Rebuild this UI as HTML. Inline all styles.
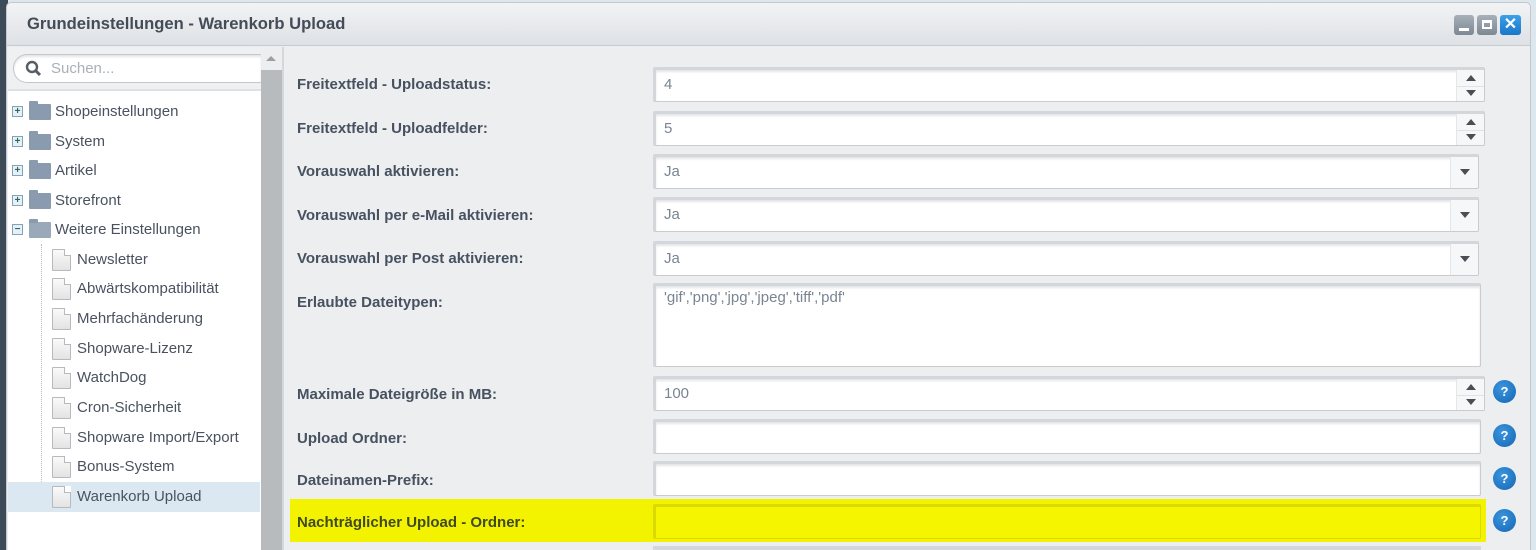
<!DOCTYPE html>
<html><head><meta charset="utf-8"><style>
*{margin:0;padding:0;box-sizing:border-box}
html,body{width:1536px;height:550px;overflow:hidden}
body{background:#dde7ee;font-family:"Liberation Sans",sans-serif;position:relative}
.abs{position:absolute}
.lbl{position:absolute;left:297px;font-size:15px;font-weight:bold;color:#475160}
.inp{position:absolute;left:653px;width:828px;height:35px;background:#fff;border:1px solid #c8ccd1;box-shadow:inset 0 2px 2px #e2e5e8;border-top:3px solid #d3d6da;border-left:3px solid #d3d6da;border-radius:2px;font-size:15px;color:#7a8592;padding:6px 0 0 8px;overflow:hidden}
.spin{position:absolute;right:0;top:0;width:28px;height:100%;background:#f6f7f8;border-left:1px solid #e4e6e8}
.spin:before{content:"";position:absolute;left:9px;top:5px;border:5px solid transparent;border-bottom:6px solid #4b4f55;border-top:0}
.spin:after{content:"";position:absolute;left:9px;bottom:5px;border:5px solid transparent;border-top:6px solid #4b4f55;border-bottom:0}
.spin i{position:absolute;left:0;right:0;top:50%;border-top:1px solid #e0e2e5}
.trig{position:absolute;right:0;top:0;width:28px;height:100%;background:#f6f7f8;border-left:1px solid #e4e6e8}
.trig:after{content:"";position:absolute;left:9px;top:12px;border:5px solid transparent;border-top:6px solid #4b4f55;border-bottom:0}
.help{position:absolute;left:1493px;width:23px;height:23px;border-radius:50%;background:radial-gradient(circle at 40% 35%,#3b95dd,#1566b3);color:#fff;font-size:13px;font-weight:bold;text-align:center;line-height:23px}
.tr{position:absolute;left:0;width:252px;height:29px;font-size:15px;color:#4a5260}
.pm{position:absolute;left:4px;top:9px;width:11px;height:11px;border:1px solid #7fa5bd;background:#e6f0f6;font-size:10px;line-height:9px;text-align:center;color:#365;font-weight:bold}
.fold{position:absolute;left:21px;top:7px;width:22px;height:16px;background:#8a9bb0;border-radius:1px}
.fold:before{content:"";position:absolute;left:0;top:-3px;width:9px;height:4px;background:#8a9bb0;border-radius:1px 1px 0 0}
.doc{position:absolute;left:44px;top:4px;width:19px;height:22px;background:linear-gradient(#fafafa,#e3e3e3);border:1px solid #b7b9bc;border-radius:1px}
.doc:after{content:"";position:absolute;right:-1px;top:-1px;width:6px;height:6px;background:#fff;border-left:1px solid #b7b9bc;border-bottom:1px solid #b7b9bc}
.tt{position:absolute;top:6px}
</style></head><body>
<div class="abs" style="left:0;top:0;width:8px;height:550px;background:#3d4b58"></div>
<div class="abs" style="left:6px;top:2px;width:1525px;height:548px;background:#eceef0;border:1px solid #c2c8ce;border-bottom:0;border-radius:5px 5px 0 0"></div>
<div class="abs" style="left:7px;top:3px;width:1523px;height:43px;background:linear-gradient(#f2f3f5,#dee1e5);border-bottom:1px solid #c6cbd0;border-radius:5px 5px 0 0"></div>
<div class="abs" style="left:27px;top:14px;font-size:16.6px;font-weight:bold;color:#444c58">Grundeinstellungen - Warenkorb Upload</div>
<div class="abs" style="left:1454px;top:15px;width:20px;height:20px;background:linear-gradient(#a7b0b9,#7d8893);border-radius:3px"><div class="abs" style="left:5px;top:13px;width:10px;height:3px;background:#fff"></div></div>
<div class="abs" style="left:1477px;top:15px;width:20px;height:20px;background:linear-gradient(#a7b0b9,#7d8893);border-radius:3px"><div class="abs" style="left:5px;top:5px;width:10px;height:9px;border:2px solid #fff;border-top-width:3px"></div></div>
<div class="abs" style="left:1500px;top:15px;width:21px;height:20px;background:linear-gradient(#3da0e8,#1a76c9);border-radius:3px;color:#fff;font-weight:bold;font-size:16px;text-align:center;line-height:20px">✕</div>

<div class="abs" style="left:8px;top:47px;width:253px;height:503px;background:#fff"></div>
<div class="abs" style="left:8px;top:47px;width:253px;height:44px;background:#eef0f2;border-bottom:2px solid #dfe2e5"></div>
<div class="abs" style="left:13px;top:54px;width:248px;height:29px;background:#fff;border:1px solid #c3c8cd;border-right:0;border-radius:14px 0 0 14px;box-shadow:inset 0 2px 2px #e3e6e9"></div>
<svg class="abs" style="left:25px;top:60px" width="18" height="18"><circle cx="7" cy="7" r="5" fill="none" stroke="#555d66" stroke-width="2.4"/><path d="M10.5 10.5L15 15" stroke="#555d66" stroke-width="3"/></svg>
<div class="abs" style="left:51px;top:60px;font-size:15px;color:#a9b0b8">Suchen...</div>
<div class="abs" style="left:261px;top:47px;width:21px;height:503px;background:#b8bbbe"></div>
<div class="abs" style="left:261px;top:47px;width:21px;height:23px;background:#eceef0"></div>
<div class="abs" style="left:266px;top:56px;border:5px solid transparent;border-bottom:5px solid #9aa0a6;border-top:0"></div>
<div class="abs" style="left:282px;top:47px;width:2px;height:503px;background:#d4d8dc"></div>

<div class="abs" style="left:8px;top:0">
<div class="tr" style="top:97px"><div class="pm">+</div><div class="fold"></div><span class="tt" style="left:47px">Shopeinstellungen</span></div>
<div class="tr" style="top:127px"><div class="pm">+</div><div class="fold"></div><span class="tt" style="left:47px">System</span></div>
<div class="tr" style="top:156px"><div class="pm">+</div><div class="fold"></div><span class="tt" style="left:47px">Artikel</span></div>
<div class="tr" style="top:186px"><div class="pm">+</div><div class="fold"></div><span class="tt" style="left:47px">Storefront</span></div>
<div class="tr" style="top:215px"><div class="pm">−</div><div class="fold" style="background:#9aa9ba"></div><span class="tt" style="left:47px">Weitere Einstellungen</span></div>
<div class="abs" style="left:33px;top:244px;width:1px;height:262px;border-left:1px dotted #bbb"></div>
<div class="tr" style="top:482px;background:#dce8f1;height:30px"></div>
<div class="tr" style="top:245px"><div class="doc"></div><span class="tt" style="left:69px">Newsletter</span></div>
<div class="tr" style="top:274px"><div class="doc"></div><span class="tt" style="left:69px">Abwärtskompatibilität</span></div>
<div class="tr" style="top:304px"><div class="doc"></div><span class="tt" style="left:69px">Mehrfachänderung</span></div>
<div class="tr" style="top:334px"><div class="doc"></div><span class="tt" style="left:69px">Shopware-Lizenz</span></div>
<div class="tr" style="top:363px"><div class="doc"></div><span class="tt" style="left:69px">WatchDog</span></div>
<div class="tr" style="top:393px"><div class="doc"></div><span class="tt" style="left:69px">Cron-Sicherheit</span></div>
<div class="tr" style="top:423px"><div class="doc"></div><span class="tt" style="left:69px">Shopware Import/Export</span></div>
<div class="tr" style="top:452px"><div class="doc"></div><span class="tt" style="left:69px">Bonus-System</span></div>
<div class="tr" style="top:482px"><div class="doc"></div><span class="tt" style="left:69px">Warenkorb Upload</span></div>
</div>

<div class="abs" style="left:290px;top:499px;width:1196px;height:43px;background:#f3f300"></div>
<div class="lbl" style="top:76px">Freitextfeld - Uploadstatus:</div>
<div class="inp" style="top:67px;width:832px">4<div class="spin"><i></i></div></div>
<div class="lbl" style="top:120px">Freitextfeld - Uploadfelder:</div>
<div class="inp" style="top:111px;width:832px">5<div class="spin"><i></i></div></div>
<div class="lbl" style="top:163px">Vorauswahl aktivieren:</div>
<div class="inp" style="top:154px;width:826px">Ja<div class="trig"></div></div>
<div class="lbl" style="top:207px">Vorauswahl per e-Mail aktivieren:</div>
<div class="inp" style="top:197px;width:826px">Ja<div class="trig"></div></div>
<div class="lbl" style="top:250px">Vorauswahl per Post aktivieren:</div>
<div class="inp" style="top:241px;width:826px">Ja<div class="trig"></div></div>
<div class="lbl" style="top:294px">Erlaubte Dateitypen:</div>
<div class="inp" style="top:283px;height:84px;font-size:15px;padding-top:3px">'gif','png','jpg','jpeg','tiff','pdf'</div>
<div class="lbl" style="top:386px">Maximale Dateigröße in MB:</div>
<div class="inp" style="top:376px;width:832px">100<div class="spin"><i></i></div></div>
<div class="help" style="top:380px">?</div>
<div class="lbl" style="top:430px">Upload Ordner:</div>
<div class="inp" style="top:419px"></div>
<div class="help" style="top:424px">?</div>
<div class="lbl" style="top:472px">Dateinamen-Prefix:</div>
<div class="inp" style="top:461px"></div>
<div class="help" style="top:467px">?</div>
<div class="lbl" style="top:514px;color:#3f4a1e">Nachträglicher Upload - Ordner:</div>
<div class="inp" style="top:504px;background:#f5f500;border-color:#dada00;box-shadow:none"></div>
<div class="help" style="top:509px">?</div>
<div class="abs" style="left:653px;top:546px;width:828px;height:4px;background:#d3d6da"></div>
</body></html>
